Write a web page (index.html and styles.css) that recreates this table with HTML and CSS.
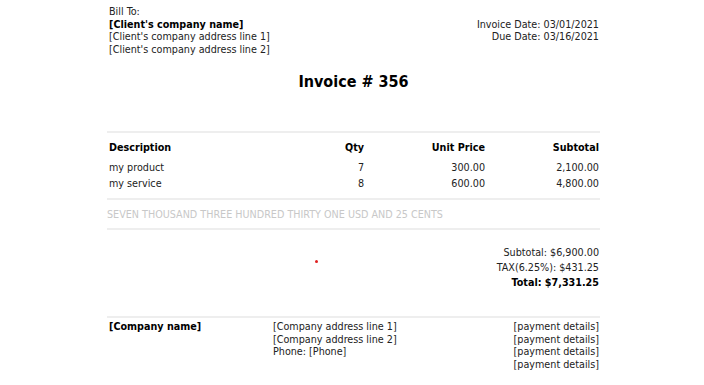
FILE: index.html
```html
<!DOCTYPE html>
<html>
<head>
<meta charset="utf-8">
<link rel="stylesheet" href="styles.css">
</head>
<body>
<div class="page">
  <div class="head">
    <div class="bill">
      <div>Bill To:</div>
      <div class="b">[Client's company name]</div>
      <div>[Client's company address line 1]</div>
      <div>[Client's company address line 2]</div>
    </div>
    <div class="dates">
      <div>Invoice Date: 03/01/2021</div>
      <div>Due Date: 03/16/2021</div>
    </div>
  </div>
  <h1 class="title">Invoice # 356</h1>
  <div class="items">
    <div class="row hdr">
      <div class="c-desc">Description</div>
      <div class="c-qty">Qty</div>
      <div class="c-price">Unit Price</div>
      <div class="c-sub">Subtotal</div>
    </div>
    <div class="row">
      <div class="c-desc">my product</div>
      <div class="c-qty">7</div>
      <div class="c-price">300.00</div>
      <div class="c-sub">2,100.00</div>
    </div>
    <div class="row">
      <div class="c-desc">my service</div>
      <div class="c-qty">8</div>
      <div class="c-price">600.00</div>
      <div class="c-sub">4,800.00</div>
    </div>
  </div>
  <div class="words">SEVEN THOUSAND THREE HUNDRED THIRTY ONE USD AND 25 CENTS</div>
  <div class="totals">
    <span class="dot"></span>
    <div>Subtotal: $6,900.00</div>
    <div>TAX(6.25%): $431.25</div>
    <div class="b">Total: $7,331.25</div>
  </div>
  <div class="foot">
    <div class="f1 b">[Company name]</div>
    <div class="f2">
      <div>[Company address line 1]</div>
      <div>[Company address line 2]</div>
      <div>Phone: [Phone]</div>
    </div>
    <div class="f3">
      <div>[payment details]</div>
      <div>[payment details]</div>
      <div>[payment details]</div>
      <div>[payment details]</div>
    </div>
  </div>
</div>
</body>
</html>
```
FILE: styles.css
```css
html, body {
  margin: 0;
  padding: 0;
  background: #fff;
}
body {
  font-family: "DejaVu Sans Condensed", "DejaVu Sans", sans-serif;
  font-stretch: condensed;
  font-size: 10.7px;
  color: #222;
}
.page {
  width: 493px;
  margin: 0 0 0 107px;
  padding: 6px 0 0 0;
  position: relative;
}
.b { font-weight: bold; color: #000; }
.head {
  display: flex;
  justify-content: space-between;
  align-items: center;
  line-height: 12.5px;
  padding: 0 1px 0 2px;
}
.dates { text-align: right; }
.title {
  text-align: center;
  font-size: 16px;
  font-weight: bold;
  color: #000;
  margin: 16px 0 0;
  line-height: 20px;
}
.items {
  margin-top: 39px;
  border-top: 2px solid #eee;
  border-bottom: 2px solid #eee;
  padding: 7px 1px 6px 2px;
}
.row {
  display: grid;
  grid-template-columns: 1fr 60px 121px 114px;
  line-height: 16px;
}
.row > div:not(.c-desc) { text-align: right; }
.hdr { font-weight: bold; color: #000; margin-bottom: 4px; }
.words {
  color: #c8c8c8;
  line-height: 14px;
  padding: 8px 0 6px;
  border-bottom: 2px solid #eee;
}
.totals {
  text-align: right;
  line-height: 15px;
  padding: 15px 1px 0 0;
  position: relative;
}
.dot {
  position: absolute;
  left: 208px;
  top: 30px;
  width: 3px;
  height: 3px;
  border-radius: 50%;
  background: #e02020;
}
.foot {
  margin-top: 26px;
  border-top: 2px solid #eee;
  padding: 3px 1px 0 2px;
  display: grid;
  grid-template-columns: 164px 1fr auto;
  line-height: 12.7px;
}
.f3 { text-align: right; }
```
